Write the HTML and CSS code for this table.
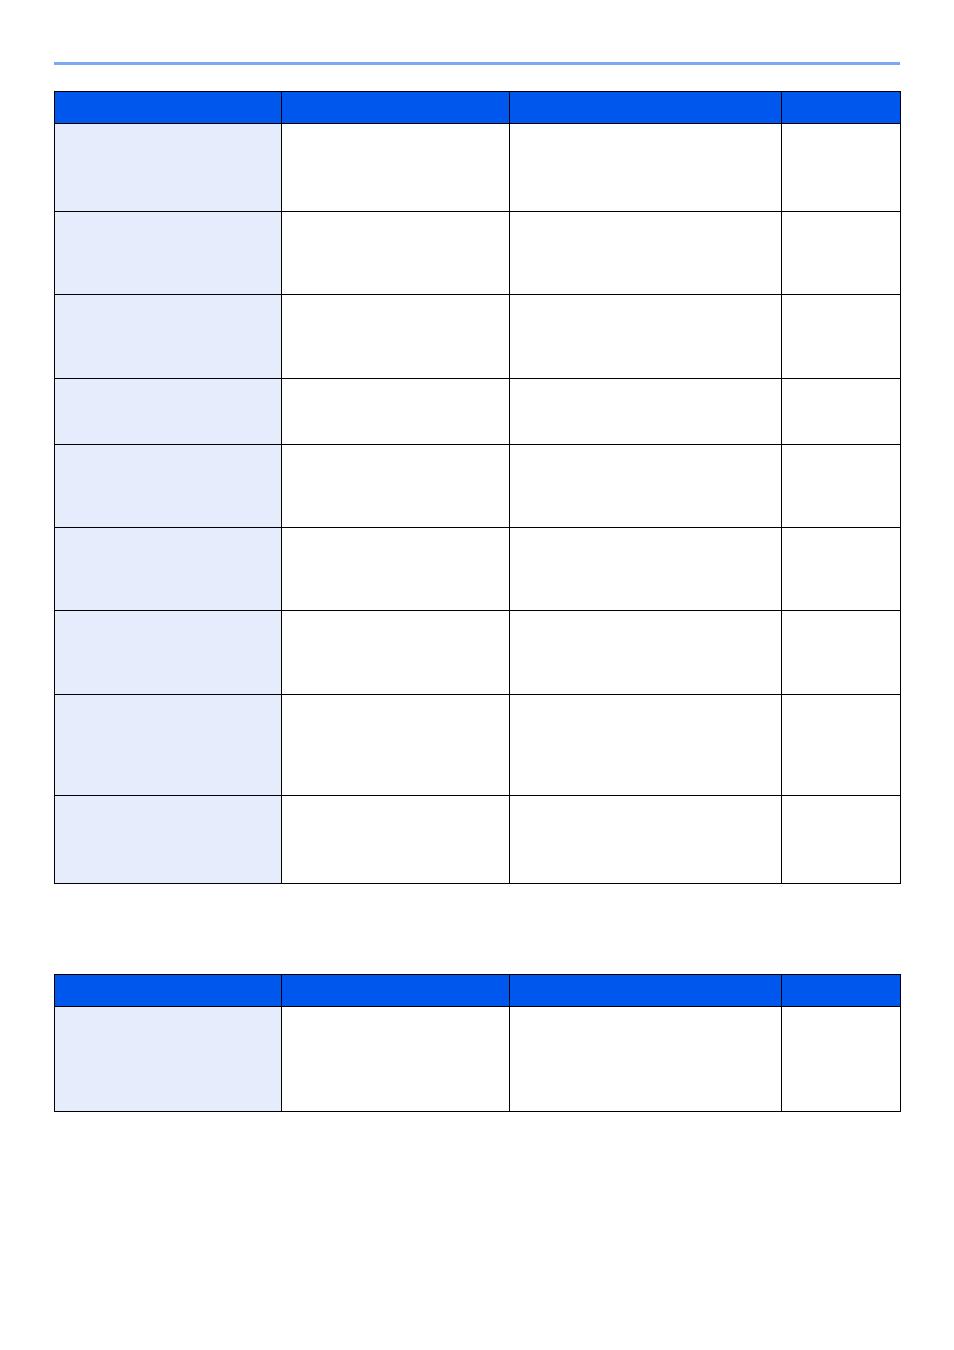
FILE: index.html
```html
<!DOCTYPE html>
<html>
<head>
<meta charset="utf-8">
<link rel="stylesheet" href="styles.css">
</head>
<body>
<div class="page">
  <div class="topline"></div>
  <table class="grid first">
    <colgroup><col class="c1"><col class="c2"><col class="c3"><col class="c4"></colgroup>
    <tr class="head"><th></th><th></th><th></th><th></th></tr>
    <tr class="r88"><td class="lab"></td><td></td><td></td><td></td></tr>
    <tr class="r83"><td class="lab"></td><td></td><td></td><td></td></tr>
    <tr class="r84"><td class="lab"></td><td></td><td></td><td></td></tr>
    <tr class="r66"><td class="lab"></td><td></td><td></td><td></td></tr>
    <tr class="r83"><td class="lab"></td><td></td><td></td><td></td></tr>
    <tr class="r83"><td class="lab"></td><td></td><td></td><td></td></tr>
    <tr class="r84"><td class="lab"></td><td></td><td></td><td></td></tr>
    <tr class="r101"><td class="lab"></td><td></td><td></td><td></td></tr>
    <tr class="r88"><td class="lab"></td><td></td><td></td><td></td></tr>
  </table>
  <table class="grid second">
    <colgroup><col class="c1"><col class="c2"><col class="c3"><col class="c4"></colgroup>
    <tr class="head"><th></th><th></th><th></th><th></th></tr>
    <tr class="r105"><td class="lab"></td><td></td><td></td><td></td></tr>
  </table>
</div>
</body>
</html>
```
FILE: styles.css
```css
html, body {
  margin: 0;
  padding: 0;
  background: #ffffff;
  font-family: "Liberation Sans", Arial, sans-serif;
}
.page {
  padding: 62px 0 0 54px;
  width: 847px;
}
.topline {
  width: 846px;
  height: 3px;
  background: #7aa9f5;
}
.grid {
  border-collapse: collapse;
  table-layout: fixed;
  width: 846px;
  margin-left: 0;
}
.first { margin-top: 26px; }
.second { margin-top: 90px; }
.grid th, .grid td {
  border: 1px solid #000;
  padding: 0;
}
.c1 { width: 227px; }
.c2 { width: 228px; }
.c3 { width: 272px; }
.c4 { width: 119px; }
.head th { background: #0057ed; height: 31px; }
.lab { background: #e5ecfc; }
.r66 td { height: 65px; }
.r83 td { height: 82px; }
.r84 td { height: 83px; }
.r88 td { height: 87px; }
.r101 td { height: 100px; }
.r105 td { height: 104px; }
```
